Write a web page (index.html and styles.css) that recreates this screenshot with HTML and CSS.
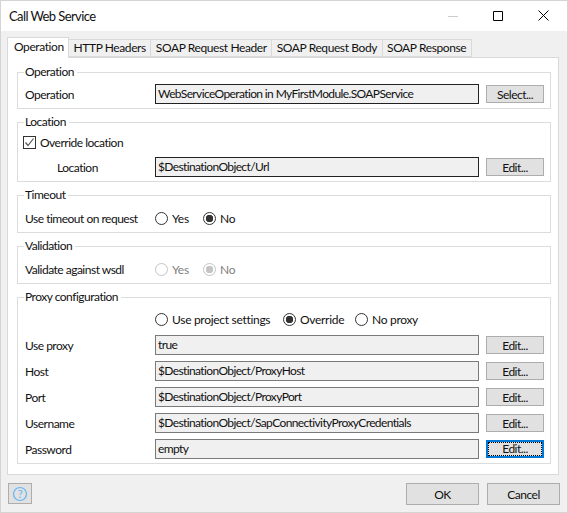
FILE: index.html
```html
<!DOCTYPE html>
<html lang="en">
<head>
    <meta charset="UTF-8">
    <meta name="viewport" content="width=device-width, initial-scale=1.0">
    <title>Call Web Service</title>
    <link rel="stylesheet" href="styles.css">
</head>
<body>
    <div class="window">
        <div class="titlebar">
            <span class="title">Call Web Service</span>
            <div class="window-controls">
                <svg width="10" height="10" viewBox="0 0 10 10"><path d="M0 5.5H10" stroke="#ccc" fill="none"/></svg>
                <svg width="10" height="10" viewBox="0 0 10 10"><path d="M.5 .5H9.5V9.5H.5Z" stroke="#000" fill="none"/></svg>
                <svg width="11" height="11" viewBox="0 0 11 11"><path d="M.5 .5L10.5 10.5M10.5 .5L.5 10.5" stroke="#000" fill="none"/></svg>
            </div>
        </div>
        <div class="content">
            <div class="tabs">
                <div class="tab active">Operation</div>
                <div class="tab">HTTP Headers</div>
                <div class="tab">SOAP Request Header</div>
                <div class="tab">SOAP Request Body</div>
                <div class="tab">SOAP Response</div>
            </div>
            <div class="panel">
                <fieldset>
                    <legend>Operation</legend>
                    <div class="row">
                        <label>Operation</label>
                        <div class="field dark">WebServiceOperation in MyFirstModule.SOAPService</div>
                        <button>Select...</button>
                    </div>
                </fieldset>
                <fieldset>
                    <legend>Location</legend>
                    <div class="check-row">
                        <span class="checkbox">
                            <svg width="11" height="11" viewBox="0 0 11 11"><path d="M1.5 5.5L4 8.5L9.5 1.5" stroke="#555" stroke-width="1.2" fill="none"/></svg>
                        </span>
                        Override location
                    </div>
                    <div class="row location-row">
                        <label class="indent">Location</label>
                        <div class="field dark">$DestinationObject/Url</div>
                        <button>Edit...</button>
                    </div>
                </fieldset>
                <fieldset class="single">
                    <legend>Timeout</legend>
                    <div class="radio-row">
                        <label>Use timeout on request</label>
                        <span class="radio"></span><span class="radio-text yes">Yes</span>
                        <span class="radio selected"></span><span class="radio-text">No</span>
                    </div>
                </fieldset>
                <fieldset class="single">
                    <legend>Validation</legend>
                    <div class="radio-row disabled">
                        <label>Validate against wsdl</label>
                        <span class="radio"></span><span class="radio-text yes">Yes</span>
                        <span class="radio selected"></span><span class="radio-text">No</span>
                    </div>
                </fieldset>
                <fieldset class="proxy">
                    <legend>Proxy configuration</legend>
                    <div class="radio-row">
                        <label></label>
                        <span class="radio"></span><span class="radio-text project">Use project settings</span>
                        <span class="radio selected"></span><span class="radio-text override">Override</span>
                        <span class="radio"></span><span class="radio-text">No proxy</span>
                    </div>
                    <div class="row">
                        <label>Use proxy</label>
                        <div class="field">true</div>
                        <button>Edit...</button>
                    </div>
                    <div class="row">
                        <label>Host</label>
                        <div class="field">$DestinationObject/ProxyHost</div>
                        <button>Edit...</button>
                    </div>
                    <div class="row">
                        <label>Port</label>
                        <div class="field">$DestinationObject/ProxyPort</div>
                        <button>Edit...</button>
                    </div>
                    <div class="row">
                        <label>Username</label>
                        <div class="field">$DestinationObject/SapConnectivityProxyCredentials</div>
                        <button>Edit...</button>
                    </div>
                    <div class="row">
                        <label>Password</label>
                        <div class="field">empty</div>
                        <button class="focused"><span>Edit...</span></button>
                    </div>
                </fieldset>
            </div>
            <div class="footer">
                <div class="help-btn">
                    <svg width="16" height="16" viewBox="0 0 16 16"><circle cx="8" cy="8" r="6.5" stroke="#64b5f6" stroke-width="1.2" fill="none"/><text x="8" y="12" text-anchor="middle" class="help-mark">?</text></svg>
                </div>
                <div class="actions">
                    <button class="big">OK</button>
                    <button class="big">Cancel</button>
                </div>
            </div>
        </div>
    </div>
</body>
</html>
```

FILE: styles.css
```css
html, body {
    margin: 0;
    padding: 0;
}
body {
    width: 568px;
    height: 513px;
    overflow: hidden;
    font-family: Lato, sans-serif;
    font-size: 12px;
    letter-spacing: -0.5px;
    color: #111;
}
.window {
    box-sizing: border-box;
    width: 568px;
    height: 513px;
    display: flex;
    flex-direction: column;
    border: 1px solid #d4d4d4;
    background-color: #f0f0f0;
}
.titlebar {
    height: 30px;
    flex: none;
    display: flex;
    align-items: center;
    justify-content: space-between;
    background-color: #fff;
}
.title {
    margin-left: 8px;
    font-size: 13px;
    letter-spacing: -0.6px;
}
.window-controls {
    display: flex;
    align-items: center;
    gap: 35px;
    margin-right: 18px;
    margin-top: -1px;
}
.content {
    flex: 1;
    display: flex;
    flex-direction: column;
    padding: 6px 8px 0 6px;
}
.tabs {
    display: flex;
    align-items: flex-end;
    height: 20px;
    position: relative;
    z-index: 1;
}
.tab {
    box-sizing: border-box;
    height: 18px;
    line-height: 16px;
    padding: 0 4.5px;
    margin-left: -1px;
    letter-spacing: -0.4px;
    border: 1px solid #d9d9d9;
    background-color: #f0f0f0;
}
.tab.active {
    height: 21px;
    width: 62px;
    margin: 0 0 -1px 0;
    padding: 0 6px;
    line-height: 17px;
    background-color: #fff;
    border-bottom: none;
}
.panel {
    box-sizing: border-box;
    height: 418px;
    width: 552px;
    padding: 6px 7px 0 9px;
    background-color: #fff;
    border: 1px solid #d9d9d9;
}
fieldset {
    margin: 0 0 5px 0;
    padding: 0 6px 4px 7px;
    min-width: 0;
    border: 1px solid #dcdcdc;
}
fieldset.single {
    padding-bottom: 5px;
}
legend {
    padding: 0 3px 0 1px;
    margin-left: -1px;
    line-height: 16px;
}
.row {
    display: flex;
    align-items: center;
    height: 20px;
    margin-top: 4px;
}
.row label, .radio-row label {
    width: 130px;
    flex: none;
}
.row label.indent {
    box-sizing: border-box;
    padding-left: 32px;
}
.field {
    box-sizing: border-box;
    width: 324px;
    height: 20px;
    line-height: 18px;
    padding-left: 2px;
    letter-spacing: -0.62px;
    border: 1px solid #7a7a7a;
    background-color: #f0f0f0;
    white-space: nowrap;
}
.field.dark {
    border-color: #222;
}
button {
    box-sizing: border-box;
    width: 58px;
    height: 18px;
    margin-left: 7px;
    padding: 0;
    font: inherit;
    letter-spacing: inherit;
    color: #111;
    background-color: #e1e1e1;
    border: 1px solid #adadad;
}
button.focused {
    border: 2px solid #0078d7;
    display: flex;
    padding: 0;
}
button.focused span {
    flex: 1;
    line-height: 12px;
    border: 1px dotted #000;
}
.check-row {
    display: flex;
    align-items: center;
    height: 16px;
    margin: 4px 0 0 -2px;
}
.location-row {
    margin-top: 7px;
}
.checkbox {
    box-sizing: border-box;
    width: 13px;
    height: 13px;
    margin-right: 4px;
    display: flex;
    border: 1px solid #333;
    background-color: #fff;
}
.radio-row {
    display: flex;
    align-items: center;
    height: 16px;
    margin-top: 7px;
    margin-bottom: 1px;
}
.radio {
    box-sizing: border-box;
    width: 13px;
    height: 13px;
    flex: none;
    margin-right: 4px;
    border: 1px solid #333;
    border-radius: 50%;
    background-color: #fff;
}
.radio.selected {
    background: radial-gradient(circle, #333 0 3.5px, #fff 4px);
}
.radio-text {
    flex: none;
    letter-spacing: -0.3px;
}
.radio-text.yes {
    width: 31px;
}
.radio-text.project {
    width: 111px;
}
.radio-text.override {
    width: 55px;
}
.disabled .radio {
    border-color: #c4c4c4;
}
.disabled .radio.selected {
    background: radial-gradient(circle, #c4c4c4 0 3.5px, #fff 4px);
}
.disabled .radio-text {
    color: #808080;
}
.proxy .radio-row {
    margin-top: 6px;
    margin-bottom: 8px;
}
.proxy .row {
    margin-top: 6px;
}
.proxy {
    margin-bottom: 0;
}
.footer {
    display: flex;
    justify-content: space-between;
    padding: 8px 0 0 1px;
    margin-right: -1px;
}
.help-btn {
    box-sizing: border-box;
    width: 24px;
    height: 21px;
    display: flex;
    align-items: center;
    justify-content: center;
    background-color: #e1e1e1;
    border: 1px solid #adadad;
}
.help-mark {
    font-size: 11px;
    fill: #64b5f6;
}
.actions {
    display: flex;
    gap: 8px;
}
button.big {
    width: 73px;
    height: 22px;
    margin: 0;
}
```
